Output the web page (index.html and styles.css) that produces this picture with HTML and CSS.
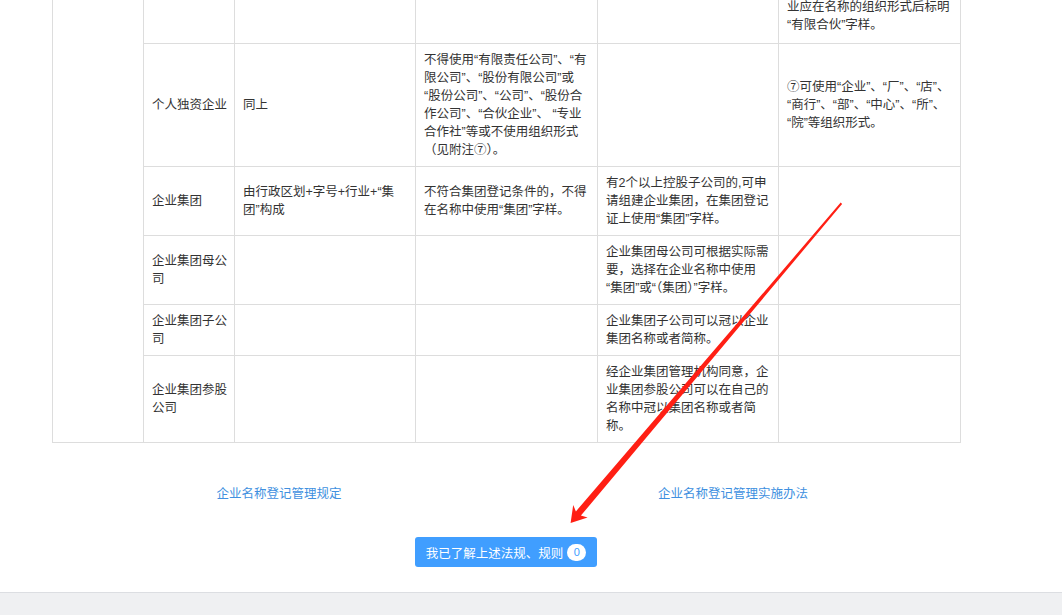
FILE: index.html
```html
<!DOCTYPE html>
<html lang="zh-CN">
<head>
<meta charset="utf-8">
<title>企业名称登记规则</title>
<link rel="stylesheet" href="styles.css">
</head>
<body>
<main class="page">
  <table class="rules">
    <colgroup>
      <col class="c-narrow"><col class="c-narrow"><col class="c-181"><col class="c-182"><col class="c-181"><col class="c-182">
    </colgroup>
    <tbody>
      <tr class="row-cut">
        <td rowspan="6" class="group"></td>
        <td></td>
        <td></td>
        <td></td>
        <td></td>
        <td class="tail">业应在名称的组织形式后标明“有限合伙”字样。</td>
      </tr>
      <tr>
        <td class="name">个人独资企业</td>
        <td>同上</td>
        <td>不得使用“有限责任公司”、“有限公司”、“股份有限公司”或“股份公司”、“公司”、“股份合作公司”、“合伙企业”、 “专业合作社”等或不使用组织形式（见附注⑦）。</td>
        <td></td>
        <td>⑦可使用“企业”、“厂”、“店”、“商行”、“部”、“中心”、“所”、“院”等组织形式。</td>
      </tr>
      <tr>
        <td class="name">企业集团</td>
        <td>由行政区划+字号+行业+“集团”构成</td>
        <td>不符合集团登记条件的，不得在名称中使用“集团”字样。</td>
        <td>有2个以上控股子公司的,可申请组建企业集团，在集团登记证上使用“集团”字样。</td>
        <td></td>
      </tr>
      <tr>
        <td class="name">企业集团母公司</td>
        <td></td>
        <td></td>
        <td>企业集团母公司可根据实际需要，选择在企业名称中使用“集团”或“（集团）”字样。</td>
        <td></td>
      </tr>
      <tr>
        <td class="name">企业集团子公司</td>
        <td></td>
        <td></td>
        <td>企业集团子公司可以冠以企业集团名称或者简称。</td>
        <td></td>
      </tr>
      <tr>
        <td class="name">企业集团参股公司</td>
        <td></td>
        <td></td>
        <td>经企业集团管理机构同意，企业集团参股公司可以在自己的名称中冠以集团名称或者简称。</td>
        <td></td>
      </tr>
    </tbody>
  </table>

  <nav class="links">
    <a href="#">企业名称登记管理规定</a>
    <a href="#">企业名称登记管理实施办法</a>
  </nav>

  <div class="actions">
    <button class="btn" type="button">我已了解上述法规、规则<span class="badge">0</span></button>
  </div>
</main>
<footer class="footer"></footer>

<svg class="annotation" width="1062" height="615" viewBox="0 0 1062 615" aria-hidden="true">
  <polygon fill="#ff1f14" points="840.7,202.6 842.1,204.0 580.9,515.6 587.6,517.4 570.6,523.0 573.2,505.0 575.9,511.4"/>
</svg>
</body>
</html>
```

FILE: styles.css
```css
html, body {
  margin: 0;
  height: 100%;
}

body {
  font-family: "Liberation Sans", "Noto Sans CJK SC", sans-serif;
  font-size: 12.5px;
  color: #333;
  background: #fff;
  overflow: hidden;
  display: flex;
  flex-direction: column;
  position: relative;
}

.page {
  width: 908px;
  margin-left: 52px;
  flex: none;
}

.rules {
  border-collapse: collapse;
  table-layout: fixed;
  width: 908px;
  margin-top: -3px;
}

.c-narrow { width: 91px; }
.c-181 { width: 181px; }
.c-182 { width: 182px; }

.rules td {
  border: 1px solid #dddddd;
  padding: 7px 9px 7px 8px;
  line-height: 18px;
  vertical-align: middle;
  word-break: normal;
}

.rules .name {
  padding-right: 4px;
}

.row-cut td {
  padding-top: 0;
  padding-bottom: 9px;
  vertical-align: bottom;
}

.links {
  display: grid;
  grid-template-columns: 1fr 1fr;
  margin-top: 42px;
  line-height: 18px;
  text-align: center;
}

.links a {
  color: #4090e0;
  text-decoration: none;
}

.actions {
  display: flex;
  justify-content: center;
  margin-top: 34px;
}

.btn {
  height: 30px;
  padding: 0 11px;
  background: #409eff;
  color: #fff;
  border: 0;
  border-radius: 3px;
  font: inherit;
  display: flex;
  align-items: center;
  gap: 4px;
}

.badge {
  display: inline-block;
  min-width: 19px;
  height: 17px;
  padding: 0 5px;
  box-sizing: border-box;
  border-radius: 9px;
  background: #fff;
  color: #409eff;
  font-size: 11px;
  line-height: 17px;
  text-align: center;
}

.footer {
  flex: 1;
  margin-top: 25px;
  border-top: 1px solid #dcdee2;
  background: #eff0f2;
}

.annotation {
  position: absolute;
  top: 0;
  left: 0;
  pointer-events: none;
}
```
